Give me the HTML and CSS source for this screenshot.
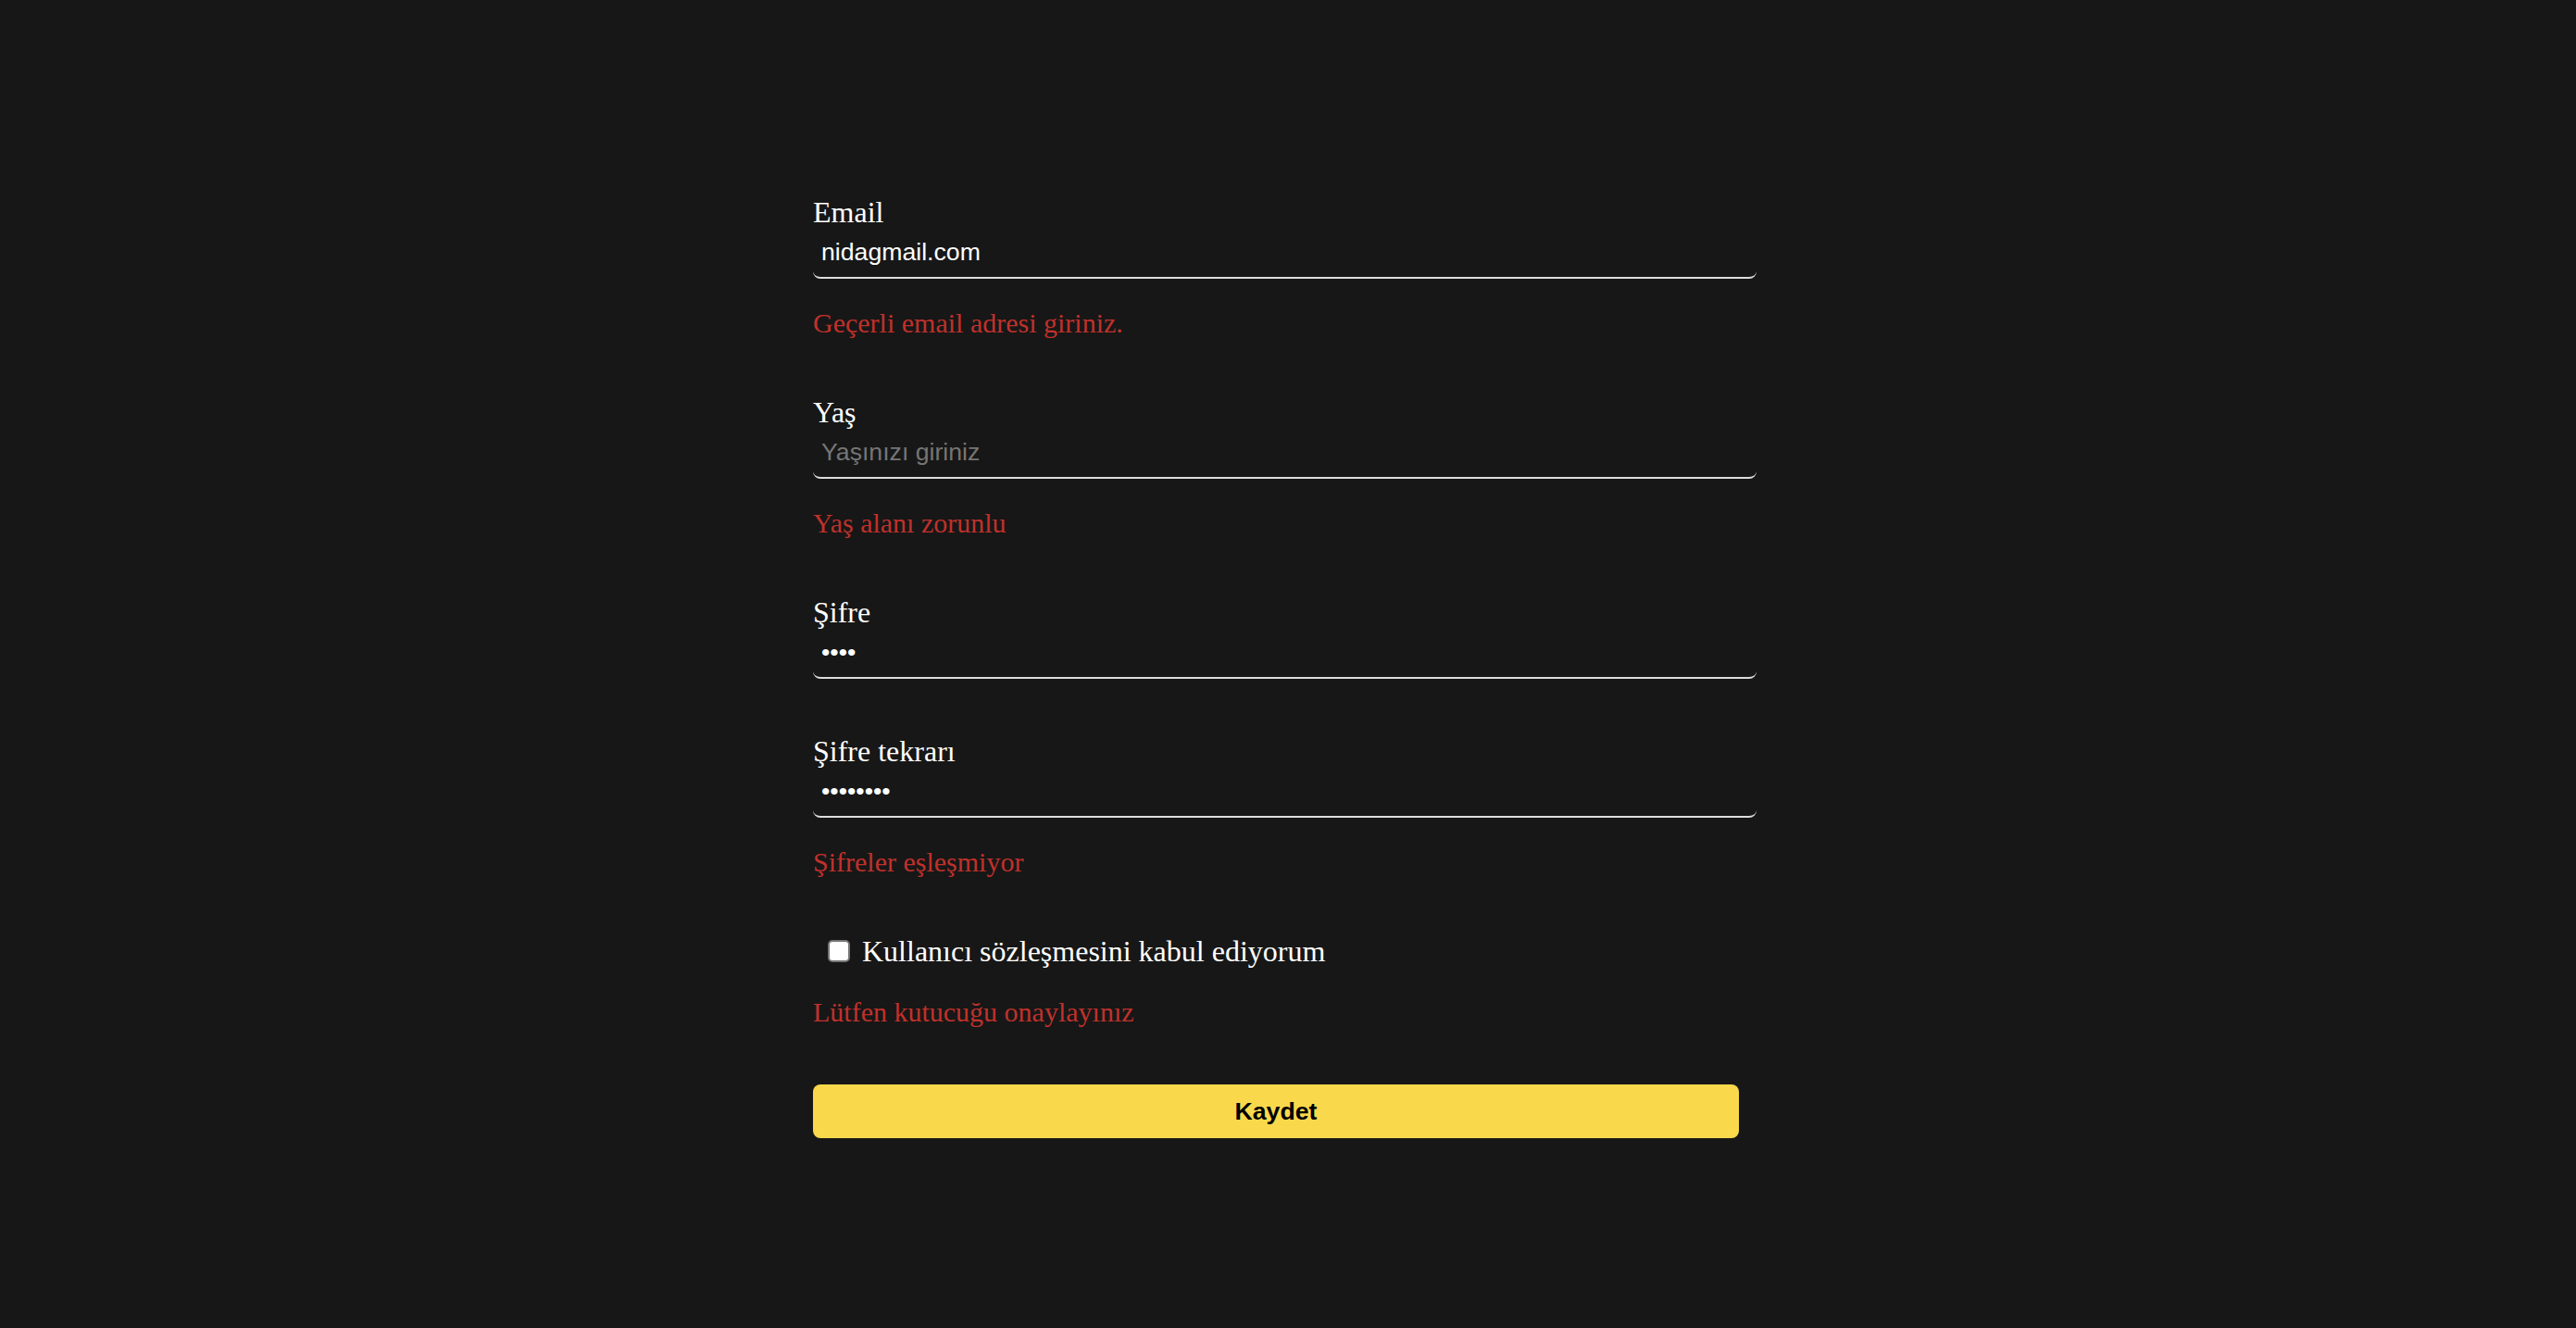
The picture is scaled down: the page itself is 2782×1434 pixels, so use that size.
FILE: index.html
```html
<!DOCTYPE html>
<html lang="tr">
<head>
<meta charset="utf-8">
<title>Kayıt Formu</title>
<link rel="stylesheet" href="styles.css">
</head>
<body>
<main class="page">
  <form class="signup" novalidate>
    <div class="field">
      <label class="label" for="email">Email</label>
      <input class="text-input" id="email" type="text" value="nidagmail.com">
      <p class="error">Geçerli email adresi giriniz.</p>
    </div>
    <div class="field">
      <label class="label" for="age">Yaş</label>
      <input class="text-input" id="age" type="text" placeholder="Yaşınızı giriniz">
      <p class="error">Yaş alanı zorunlu</p>
    </div>
    <div class="field">
      <label class="label" for="pw">Şifre</label>
      <input class="text-input" id="pw" type="password" value="1234">
    </div>
    <div class="field">
      <label class="label" for="pw2">Şifre tekrarı</label>
      <input class="text-input" id="pw2" type="password" value="12345678">
      <p class="error">Şifreler eşleşmiyor</p>
    </div>
    <div class="field">
      <label class="check-row" for="terms">
        <input class="check" id="terms" type="checkbox">
        <span class="check-text">Kullanıcı sözleşmesini kabul ediyorum</span>
      </label>
      <p class="error">Lütfen kutucuğu onaylayınız</p>
    </div>
    <button class="submit" type="button">Kaydet</button>
  </form>
</main>
</body>
</html>
```

FILE: styles.css
```css
html, body {
  margin: 0;
  padding: 0;
  background: #171717;
}

body {
  font-family: "Liberation Serif", "Times New Roman", serif;
  color: #ffffff;
  min-height: 1434px;
}

.page {
  width: 1026px;
  margin: 0 auto;
  padding-top: 211px;
}

.signup {
  display: flex;
  flex-direction: column;
  align-items: flex-start;
}

.field {
  width: 100%;
  margin-bottom: 60px;
}

.label {
  display: block;
  font-size: 32px;
  line-height: 36px;
  color: #ffffff;
}

.text-input {
  display: block;
  box-sizing: border-box;
  width: 1019px;
  height: 54px;
  margin: 0;
  padding: 0 8px 2px 9px;
  background: transparent;
  border: none;
  border-bottom: 2px solid #dcdcdc;
  border-radius: 8px;
  outline: none;
  color: #ffffff;
  font-family: "Liberation Sans", Arial, sans-serif;
  font-size: 26.67px;
}

.text-input::placeholder {
  color: #757575;
}

.error {
  margin: 31px 0 1px;
  font-size: 30px;
  line-height: 34px;
  color: #c0312b;
}

.check-row {
  display: flex;
  align-items: center;
  height: 36px;
  padding-left: 16px;
  gap: 13px;
}

.check {
  appearance: none;
  -webkit-appearance: none;
  box-sizing: border-box;
  width: 24px;
  height: 24px;
  margin: 0;
  background: #ffffff;
  border: 2px solid #767676;
  border-radius: 5px;
}

.check-text {
  font-size: 32px;
  line-height: 36px;
  color: #ffffff;
}

.submit {
  box-sizing: border-box;
  width: 1000px;
  height: 58px;
  margin: 0;
  padding: 0;
  border: none;
  border-radius: 8px;
  background: #f9d94b;
  color: #000000;
  font-family: "Liberation Sans", Arial, sans-serif;
  font-size: 26.67px;
  font-weight: 700;
}
```
